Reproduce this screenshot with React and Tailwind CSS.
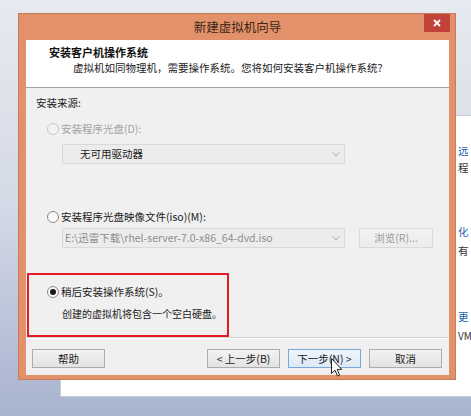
import React from "react";

const Radio = ({ checked, disabled }) => (
    <span
        className={
            "flex items-center justify-center w-[12px] h-[12px] rounded-full border " +
            (disabled ? "border-[#c6c6c6] bg-[#f2f2f2]" : "border-[#8a8a8a] bg-gradient-to-b from-[#f4f4f4] to-[#ffffff]")
        }
    >
        {checked && <span className="w-[6px] h-[6px] rounded-full bg-[#1a1a1a]" />}
    </span>
);

const Chevron = () => (
    <svg width="8" height="5" viewBox="0 0 8 5" className="mr-[4px]">
        <path d="M0.5 0.5 L4 4 L7.5 0.5" fill="none" stroke="#a8a8a8" strokeWidth="1" />
    </svg>
);

const Combo = ({ children, muted }) => (
    <div className="flex items-center justify-between w-[283px] h-[20px] border border-[#d9d9d9] bg-[#ececec]">
        <span className={"whitespace-nowrap " + (muted ? "pl-[2px] text-[#8c8c8c]" : "pl-[17px] text-[#1a1a1a]")}>
            {children}
        </span>
        <Chevron />
    </div>
);

const WinButton = ({ children, focused, disabled, className = "" }) => (
    <div
        className={
            "flex items-center justify-center h-[19px] border " +
            (focused
                ? "border-[#7aa7d8] bg-gradient-to-b from-[#eef5fc] to-[#dde9f5] "
                : "border-[#adadad] bg-gradient-to-b from-[#f2f2f2] to-[#e3e3e3] ") +
            (disabled ? "text-[#9a9a9a] border-[#dadada] from-[#f2f2f2] to-[#ececec] " : "text-[#1a1a1a] ") +
            className
        }
    >
        {children}
    </div>
);

export default function App() {
    return (
        <div className="relative w-[471px] h-[416px] overflow-hidden bg-gradient-to-b from-[#e7eaef] via-[#d3d9e6] to-[#a8b3cf] font-['Noto_Sans_CJK_SC',sans-serif] text-[10.5px] leading-[14px]">
            {/* window behind the dialog */}
            <div className="absolute left-[60px] top-[115px] w-[430px] h-[282px] bg-white border border-[#c6ccd8] overflow-hidden">
                <div className="flex flex-col pl-[397px] pt-[28px] whitespace-nowrap">
                    <span className="text-[#1f5fa8]">远</span>
                    <span className="mt-[3px] text-[#333]">程</span>
                    <span className="mt-[50px] text-[#1f5fa8]">化</span>
                    <span className="mt-[5px] text-[#333]">有</span>
                    <span className="mt-[52px] text-[#1f5fa8]">更</span>
                    <span className="mt-[5px] text-[#333] text-[10px]">VM</span>
                </div>
            </div>

            {/* dialog */}
            <div className="absolute left-[18px] top-[13px] w-[438px] h-[367px] flex flex-col bg-[#e3916a] border border-[#c97b55] pl-[7px] pr-[6px] pb-[4px]">
                <div className="relative flex items-center justify-center h-[26px] shrink-0">
                    <span className="text-[12.5px] text-[#3b2416]">新建虚拟机向导</span>
                    <div className="absolute right-[-1px] top-0 w-[26px] h-[18px] bg-[#c2433a] flex items-center justify-center">
                        <svg width="8" height="8" viewBox="0 0 8 8">
                            <path d="M1 1 L7 7 M7 1 L1 7" stroke="#ffffff" strokeWidth="1.8" />
                        </svg>
                    </div>
                </div>

                <div className="flex flex-col flex-1 bg-[#f0f0f0]">
                    {/* header */}
                    <div className="h-[48px] bg-white border-b border-[#a3a3a3] flex flex-col pt-[5px]">
                        <span className="pl-[23px] text-[11px] font-bold text-[#111]">安装客户机操作系统</span>
                        <span className="pl-[47px] mt-[2px] text-[#1a1a1a]">虚拟机如同物理机，需要操作系统。您将如何安装客户机操作系统?</span>
                    </div>

                    {/* body */}
                    <div className="flex flex-col h-[250px] border-b border-[#d6d6d6] text-[#1a1a1a]">
                        <span className="pl-[10px] pt-[8px]">安装来源:</span>
                        <div className="flex items-center gap-[2px] pl-[21px] mt-[12px] text-[#a3a3a3]">
                            <Radio disabled />
                            <span>安装程序光盘(D):</span>
                        </div>
                        <div className="ml-[36px] mt-[8px]">
                            <Combo>无可用驱动器</Combo>
                        </div>

                        <div className="flex items-center gap-[2px] pl-[21px] mt-[46px]">
                            <Radio />
                            <span>安装程序光盘映像文件(iso)(M):</span>
                        </div>
                        <div className="flex items-center ml-[36px] mt-[4px]">
                            <Combo muted>E:\迅雷下载\rhel-server-7.0-x86_64-dvd.iso</Combo>
                            <WinButton disabled className="ml-[14px] w-[74px] h-[20px]">浏览(R)...</WinButton>
                        </div>

                        <div className="ml-[1px] mt-[25px] w-[202px] h-[64px] border-2 border-[#e31b23] flex flex-col whitespace-nowrap">
                            <div className="flex items-center gap-[2px] pl-[18px] pt-[10px]">
                                <Radio checked />
                                <span>稍后安装操作系统(S)。</span>
                            </div>
                            <span className="pl-[33px] mt-[8px] text-[10px]">创建的虚拟机将包含一个空白硬盘。</span>
                        </div>
                    </div>

                    {/* footer */}
                    <div className="flex items-start pt-[10px] pl-[6px] pr-[7px] border-t border-white">
                        <WinButton className="w-[73px]">帮助</WinButton>
                        <div className="flex gap-[8px] ml-auto">
                            <WinButton className="w-[73px]">&lt; 上一步(B)</WinButton>
                            <WinButton focused className="w-[73px]">下一步(N) &gt;</WinButton>
                            <WinButton className="w-[73px]">取消</WinButton>
                        </div>
                    </div>
                </div>
            </div>

            {/* mouse cursor */}
            <svg className="absolute left-[331px] top-[358px]" width="12" height="19" viewBox="0 0 12 19">
                <path d="M0.5 0.5 L0.5 15.5 L4 12.2 L6.5 18 L8.6 17.1 L6.2 11.4 L10.8 11.4 Z" fill="#ffffff" stroke="#222" strokeWidth="1" strokeLinejoin="round" />
            </svg>
        </div>
    );
}
